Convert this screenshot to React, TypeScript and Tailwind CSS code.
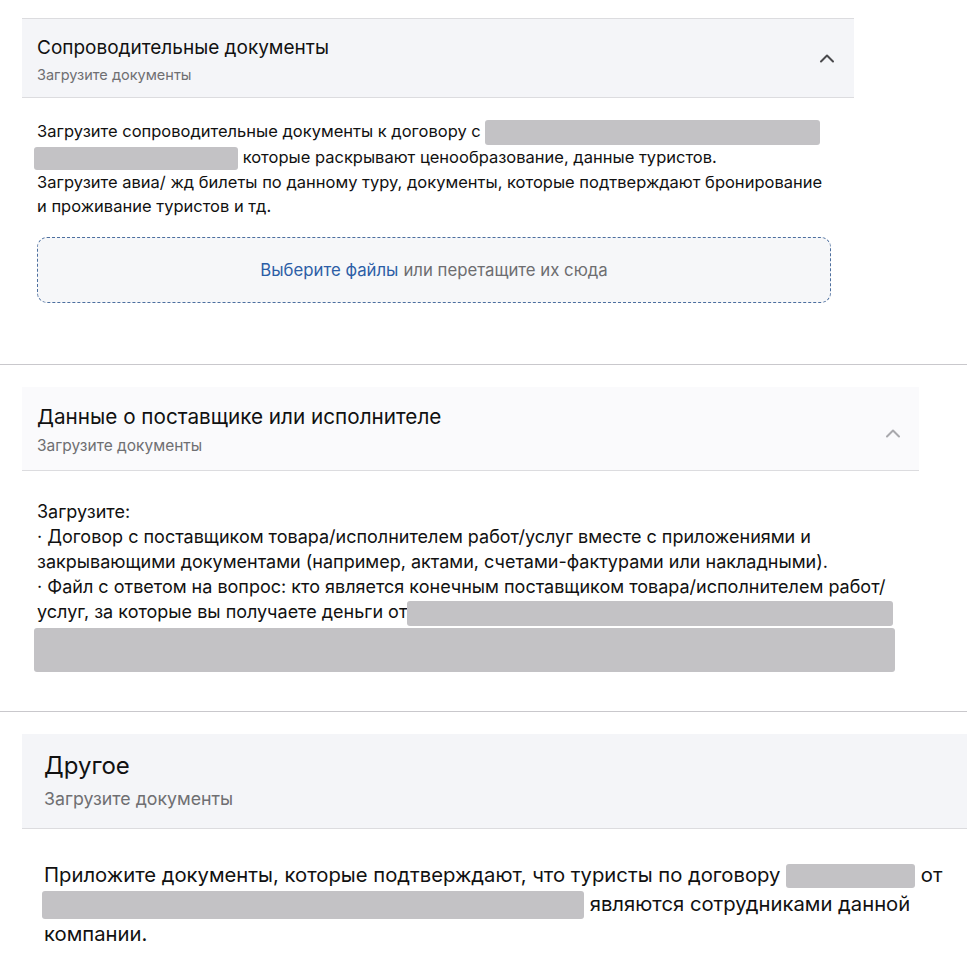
import type { ReactNode } from 'react';

function Chevron({ className }: { className: string }) {
  return (
    <svg viewBox="0 0 16 10" className={className} fill="none">
      <polyline points="2,8.5 8,2.5 14,8.5" stroke="currentColor" strokeWidth="2" strokeLinecap="round" strokeLinejoin="round" />
    </svg>
  );
}

function Redact({ className }: { className: string }) {
  return <span className={'inline-block rounded-[3px] bg-[#c3c2c5] align-middle ' + className} />;
}

function Divider() {
  return <div className="h-px w-full bg-[#c9c8cc]" />;
}

type HeaderProps = {
  title: string;
  className: string;
  titleClass: string;
  subClass: string;
  chevron?: ReactNode;
};

function Header({ title, className, titleClass, subClass, chevron }: HeaderProps) {
  return (
    <div className={'flex items-center justify-between border-b border-[#dcdcdf] ' + className}>
      <div>
        <div className={'text-[#111] ' + titleClass}>{title}</div>
        <div className={'text-[#6f6f72] ' + subClass}>Загрузите документы</div>
      </div>
      {chevron}
    </div>
  );
}

export default function App() {
  return (
    <div className="min-h-[961px] w-[967px] overflow-hidden bg-white text-[#111]" style={{ fontFamily: 'Inter, "Noto Sans", sans-serif' }}>
      {/* Сопроводительные документы */}
      <section className="pt-[18px] pb-[61px]">
        <div className="ml-[22px] w-[832px]">
          <Header
            title="Сопроводительные документы"
            className="h-[80px] border-t bg-[#f4f5f8] pt-[4px] pl-[15px] pr-[19px]"
            titleClass="text-[19px] leading-[24px]"
            subClass="mt-[5px] text-[14.5px] leading-[20px]"
            chevron={<Chevron className="-mt-[4px] h-[10px] w-[16px] text-[#4a4a4d]" />}
          />
          <div className="px-[15px] pt-[21px] text-[16.5px] leading-[24px]">
            <p>
              Загрузите сопроводительные документы к договору с <Redact className="h-[25px] w-[335px]" />
              <br />
              <Redact className="-ml-[3px] h-[23px] w-[204px]" /> которые раскрывают ценообразование, данные туристов.
              <br />
              Загрузите авиа/ жд билеты по данному туру, документы, которые подтверждают бронирование
              <br />
              и проживание туристов и тд.
            </p>
            <div className="mt-[19px] flex h-[66px] w-[794px] items-center justify-center rounded-[10px] border border-dashed border-[#4d6f9f] bg-[#f6f7f9] text-[16.75px]">
              <span className="text-[#2c5ea6]">Выберите файлы</span>
              <span className="ml-[5px] text-[#6d6d70]">или перетащите их сюда</span>
            </div>
          </div>
        </div>
      </section>

      <Divider />

      {/* Данные о поставщике */}
      <section className="pt-[22px] pb-[39px]">
        <div className="ml-[22px] w-[897px]">
          <Header
            title="Данные о поставщике или исполнителе"
            className="h-[84px] bg-[#fafafc] pt-[3px] pl-[15px] pr-[18px]"
            titleClass="text-[20.7px] leading-[28px]"
            subClass="mt-[4px] text-[15.5px] leading-[22px]"
            chevron={<Chevron className="mt-[5px] h-[10px] w-[16px] text-[#a9a9ad]" />}
          />
          <div className="px-[15px] pt-[28px] text-[18px] leading-[25px]">
            <p>
              Загрузите:
              <br />· Договор с поставщиком товара/исполнителем работ/услуг вместе с приложениями и
              <br />
              закрывающими документами (например, актами, счетами-фактурами или накладными).
              <br />· Файл с ответом на вопрос: кто является конечным поставщиком товара/исполнителем работ/
              <br />
              услуг, за которые вы получаете деньги от<Redact className="h-[25px] w-[486px]" />
            </p>
            <Redact className="-ml-[3px] mt-[2px] block h-[44px] w-[861px]" />
          </div>
        </div>
      </section>

      <Divider />

      {/* Другое */}
      <section className="pt-[22px]">
        <div className="ml-[22px]">
          <Header
            title="Другое"
            className="h-[95px] bg-[#f4f5f8] pt-[4px] pl-[22px]"
            titleClass="-mt-[4px] text-[24px] leading-[32px]"
            subClass="mt-[5px] text-[17.75px] leading-[24px]"
          />
          <div className="px-[22px] pt-[31px] text-[20.25px] leading-[29px]">
            <p>
              Приложите документы, которые подтверждают, что туристы по договору <Redact className="h-[24px] w-[129px]" /> от
              <br />
              <Redact className="-ml-[2px] h-[28px] w-[542px]" /> являются сотрудниками данной
              <br />
              компании.
            </p>
          </div>
        </div>
      </section>
    </div>
  );
}
